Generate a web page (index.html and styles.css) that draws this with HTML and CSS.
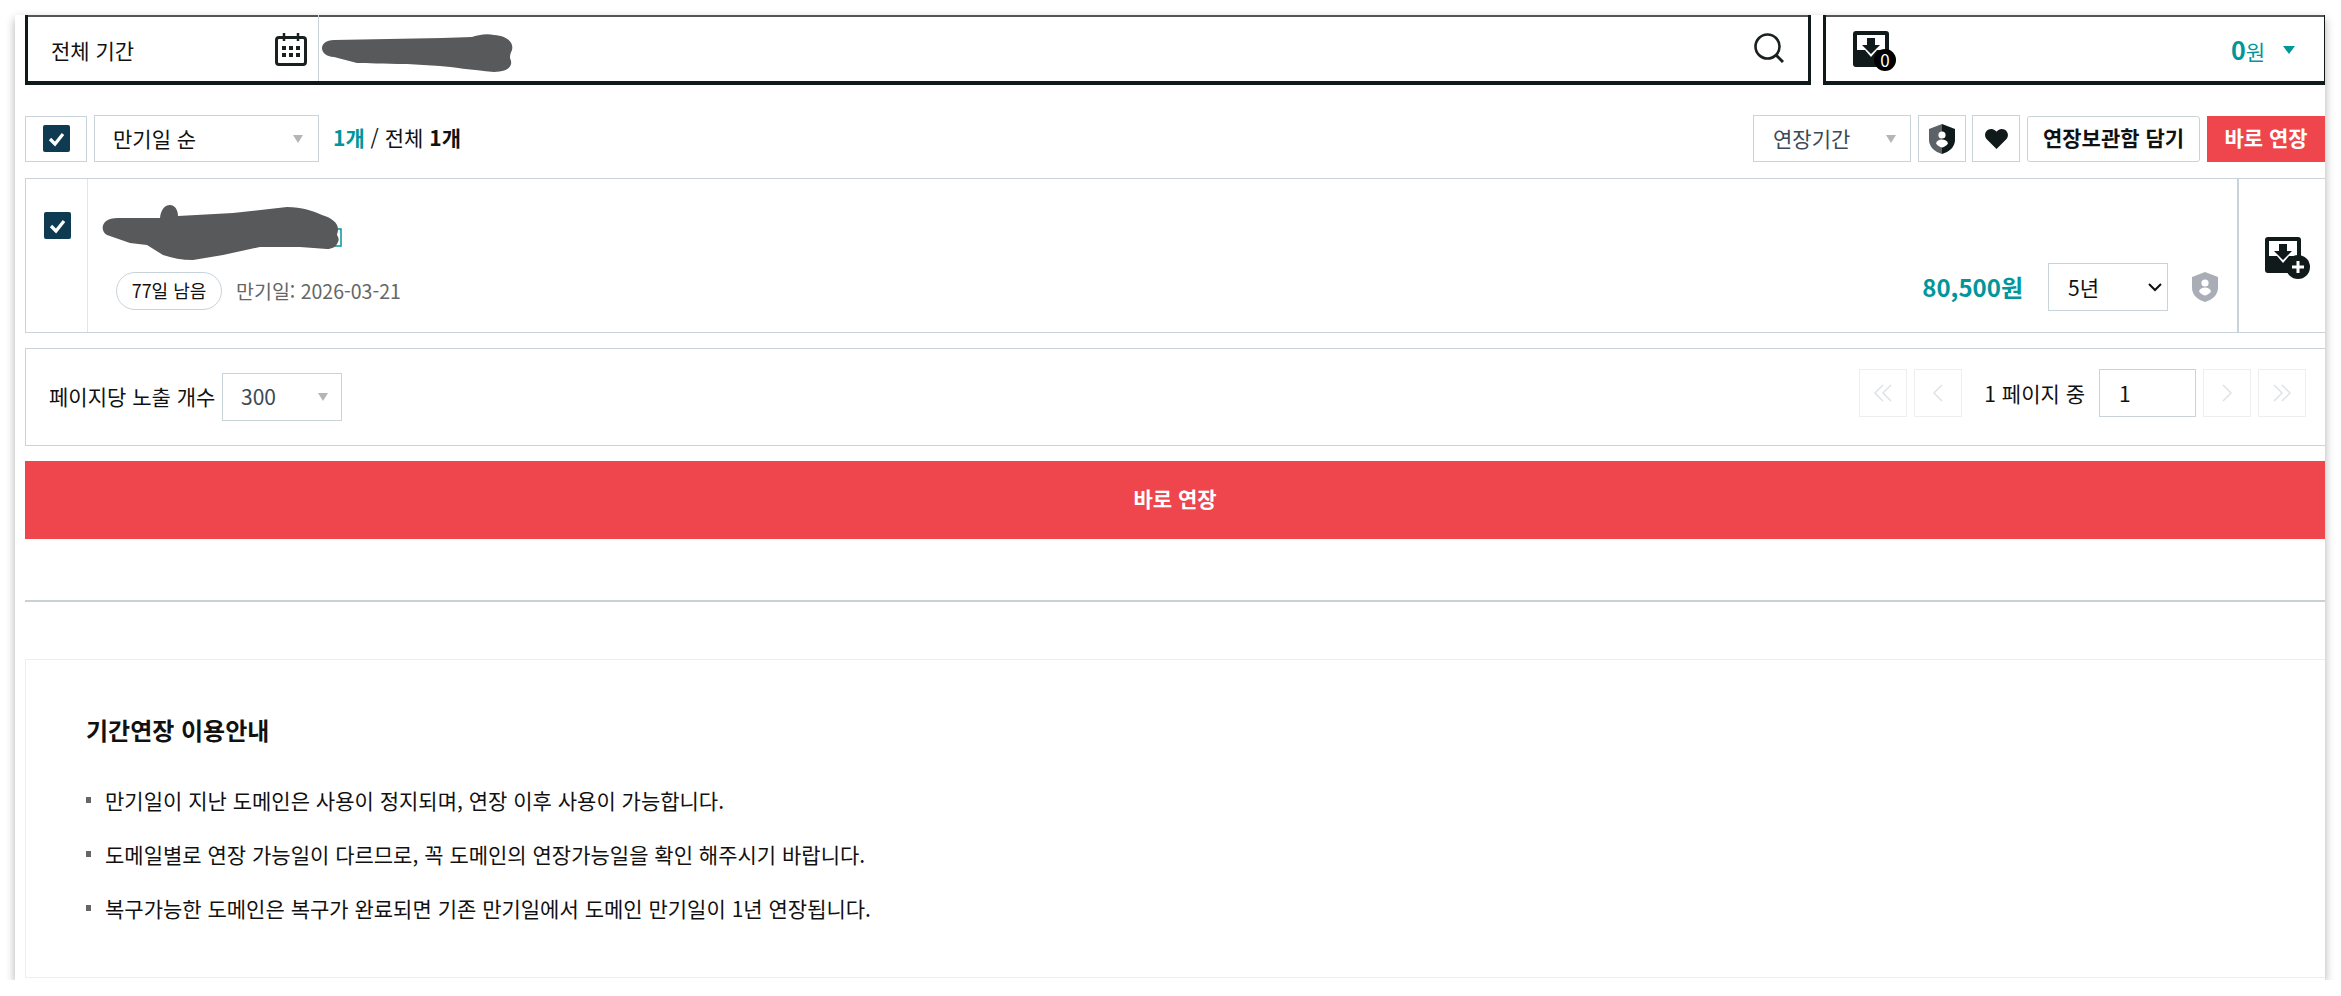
FILE: index.html
```html
<!DOCTYPE html>
<html lang="ko">
<head>
    <meta charset="UTF-8">
    <title>기간연장</title>
    <link rel="stylesheet" href="styles.css">
</head>
<body>
    <main class="page">
        <!-- Search + cart -->
        <div class="top-bar">
            <div class="search-box">
                <div class="period">
                    <span>전체 기간</span>
                    <svg class="icon-calendar" viewBox="0 0 32 33">
                        <rect x="1.5" y="4.5" width="29" height="27" rx="2.5" fill="none" stroke="#1a1f1f" stroke-width="3"/>
                        <path d="M9 0v8M23 0v8" stroke="#1a1f1f" stroke-width="2.5"/>
                        <path d="M7 13h4v4H7zM14 13h4v4h-4zM21 13h4v4h-4zM7 20h4v4H7zM14 20h4v4h-4zM21 20h4v4h-4z" fill="#1a1f1f"/>
                    </svg>
                </div>
                <div class="keyword">
                    <svg class="scribble scribble-search" viewBox="0 0 192 38">
                        <path d="M12 6L120 4L150 3C155 1 165 -1 172 1C185 2 192 8 190 16C188 20 188 22 188 24C192 32 186 38 172 38C150 36 130 33 118 32L85 30C60 30 45 29 35 29L12 23C-4 22 -4 6 12 6Z" fill="#58595b"/>
                    </svg>
                </div>
                <svg class="icon-search" viewBox="0 0 30 30">
                    <circle cx="13.5" cy="13.5" r="12" fill="none" stroke="#1a1f1f" stroke-width="2.6"/>
                    <path d="M22 22l7 7" stroke="#1a1f1f" stroke-width="3"/>
                </svg>
            </div>
            <div class="cart-box">
                <span class="icon-wrap">
                    <svg class="icon-inbox" viewBox="0 0 36 36">
                        <path fill-rule="evenodd" d="M3 0h30a3 3 0 0 1 3 3v30a3 3 0 0 1-3 3H3a3 3 0 0 1-3-3V3a3 3 0 0 1 3-3zM4 4v15h8l6 7 6-7h8V4z" fill="#101a1a"/>
                        <path d="M14 7h8v7h5l-9 9-9-9h5z" fill="#101a1a"/>
                    </svg>
                    <span class="cart-count">0</span>
                </span>
                <span class="cart-total"><b>0</b>원</span>
                <span class="caret caret-teal"></span>
            </div>
        </div>

        <!-- Toolbar -->
        <div class="toolbar">
            <div class="check-cell"><span class="check"><svg viewBox="0 0 27 27"><path d="M7 14l5 5 8-10" fill="none" stroke="#fff" stroke-width="3.2"/></svg></span></div>
            <div class="fake-select sort-select"><span>만기일 순</span><span class="caret"></span></div>
            <div class="count"><b class="teal">1개</b> / 전체 <b>1개</b></div>
            <div class="toolbar-right">
                <div class="fake-select period-select"><span>연장기간</span><span class="caret"></span></div>
                <div class="icon-btn">
                    <svg class="icon-shield" viewBox="0 0 26 30">
                        <path d="M13 0L0 5v11c0 7 6 12 13 14z" fill="#5d6266"/>
                        <path d="M13 0l13 5v11c0 7-6 12-13 14z" fill="#101a1a"/>
                        <circle cx="13" cy="11" r="3.6" fill="#fff"/>
                        <path d="M7 19.500c1-3 3-4 6-4s5 1 6 4c-1.500 2-3.500 3.500-6 4-2.500-.5-4.500-2-6-4z" fill="#fff"/>
                    </svg>
                </div>
                <div class="icon-btn">
                    <svg class="icon-heart" viewBox="0 0 24 21">
                        <path d="M12 21L1.500 10.500C-2 6 1 0 6.500 0 9 0 11 1.500 12 3c1-1.500 3-3 5.500-3C23 0 26 6 22.500 10.500z" fill="#101a1a"/>
                    </svg>
                </div>
                <button class="btn-keep">연장보관함 담기</button>
                <button class="btn-now">바로 연장</button>
            </div>
        </div>

        <!-- Domain row -->
        <div class="item">
            <div class="item-check"><span class="check"><svg viewBox="0 0 27 27"><path d="M7 14l5 5 8-10" fill="none" stroke="#fff" stroke-width="3.2"/></svg></span></div>
            <div class="item-body">
                <div class="item-name">
                    <svg class="scribble scribble-name" viewBox="0 0 240 56">
                        <rect x="230" y="24" width="9" height="17" fill="none" stroke="#00969c" stroke-width="1.500"/>
                        <path d="M16 13L58 13C59 4 63 0 68 0C73 0 76 5 76 11L131 8L185 2C200 2 211 6 220 10C230 13 236 18 236 24C236 27 235 29 235 30C237 33 237 35 236 37C234 42 230 44 225 44L198 42L158 42L121 50L91 55C80 55 70 53 61 50L45 40L28 38L5 30C-2 26 -2 13 16 13Z" fill="#58595b"/>
                    </svg>
                </div>
                <div class="item-meta">
                    <span class="days">77일 남음</span>
                    <span class="expire">만기일: 2026-03-21</span>
                </div>
            </div>
            <div class="item-order">
                <span class="price">80,500원</span>
                <select class="year-select"><option>5년</option></select>
                <svg class="icon-shield icon-shield-off" viewBox="0 0 26 30">
                    <path d="M13 0L0 5v11c0 7 6 12 13 14 7-2 13-7 13-14V5z" fill="#a9aeb6"/>
                    <circle cx="13" cy="11" r="3.6" fill="#fff"/>
                    <path d="M7 19.500c1-3 3-4 6-4s5 1 6 4c-1.500 2-3.500 3.500-6 4-2.500-.5-4.500-2-6-4z" fill="#fff"/>
                </svg>
            </div>
            <div class="item-add">
                <span class="icon-wrap">
                    <svg class="icon-inbox" viewBox="0 0 36 36">
                        <path fill-rule="evenodd" d="M3 0h30a3 3 0 0 1 3 3v30a3 3 0 0 1-3 3H3a3 3 0 0 1-3-3V3a3 3 0 0 1 3-3zM4 4v15h8l6 7 6-7h8V4z" fill="#101a1a"/>
                        <path d="M14 7h8v7h5l-9 9-9-9h5z" fill="#101a1a"/>
                    </svg>
                    <span class="cart-count add-plus">
                        <svg viewBox="0 0 24 24"><path d="M12 6v12M6 12h12" stroke="#fff" stroke-width="3"/></svg>
                    </span>
                </span>
            </div>
        </div>

        <!-- Paging -->
        <div class="pager">
            <span class="pager-label">페이지당 노출 개수</span>
            <div class="fake-select size-select"><span>300</span><span class="caret"></span></div>
            <div class="pager-right">
                <span class="page-btn"><svg viewBox="0 0 20 18"><path d="M10 1L2 9l8 8M18 1l-8 8 8 8" fill="none" stroke="#dfe2e5" stroke-width="1.500"/></svg></span>
                <span class="page-btn"><svg viewBox="0 0 20 18"><path d="M14 1L6 9l8 8" fill="none" stroke="#dfe2e5" stroke-width="1.500"/></svg></span>
                <span class="page-text">1 페이지 중</span>
                <input class="page-input" value="1">
                <span class="page-btn"><svg viewBox="0 0 20 18"><path d="M6 1l8 8-8 8" fill="none" stroke="#dfe2e5" stroke-width="1.500"/></svg></span>
                <span class="page-btn"><svg viewBox="0 0 20 18"><path d="M2 1l8 8-8 8M10 1l8 8-8 8" fill="none" stroke="#dfe2e5" stroke-width="1.500"/></svg></span>
            </div>
        </div>

        <button class="btn-renew">바로 연장</button>
        <hr class="line">

        <!-- Guide -->
        <section class="guide">
            <h2>기간연장 이용안내</h2>
            <ul>
                <li>만기일이 지난 도메인은 사용이 정지되며, 연장 이후 사용이 가능합니다.</li>
                <li>도메일별로 연장 가능일이 다르므로, 꼭 도메인의 연장가능일을 확인 해주시기 바랍니다.</li>
                <li>복구가능한 도메인은 복구가 완료되면 기존 만기일에서 도메인 만기일이 1년 연장됩니다.</li>
            </ul>
        </section>
    </main>
</body>
</html>
```

FILE: styles.css
```css
* {
    box-sizing: border-box;
}

body {
    margin: 0;
    background-color: #fff;
    color: #111;
    font-family: "Noto Sans CJK KR", "Noto Sans", sans-serif;
    font-size: 21px;
    line-height: 30px;
}

b {
    font-weight: 700;
}

.teal {
    color: #00969c;
}

.page {
    width: 2310px;
    height: 965px;
    margin: 15px 0 0 15px;
    padding-left: 10px;
    background-color: #fff;
    box-shadow: 0 4px 9px rgba(0, 0, 0, 0.32);
}

/* Search + cart */
.top-bar {
    display: flex;
    gap: 12px;
    height: 70px;
}

.search-box {
    display: flex;
    align-items: center;
    flex: 1;
    padding-right: 24px;
    border: solid #101a1a;
    border-width: 0 3px 4px 3px;
    box-shadow: inset 0 2px 0 #555;
}

.period {
    display: flex;
    align-items: center;
    justify-content: space-between;
    align-self: stretch;
    width: 291px;
    padding: 3px 11px 0 23px;
    border-right: 1px solid #c9d3da;
}

.icon-calendar {
    width: 32px;
    height: 33px;
    margin-top: -1px;
}

.keyword {
    position: relative;
    flex: 1;
    align-self: stretch;
}

.scribble {
    position: absolute;
}

.scribble-search {
    left: 3px;
    top: 19px;
    width: 192px;
    height: 38px;
}

.icon-search {
    width: 30px;
    height: 30px;
    margin-top: -1px;
}

.cart-box {
    display: flex;
    align-items: center;
    width: 502px;
    padding: 0 29px 0 27px;
    border: solid #101a1a;
    border-width: 0 1px 4px 3px;
    box-shadow: inset 0 2px 0 #555;
}

.icon-wrap {
    position: relative;
    display: block;
    width: 36px;
    height: 36px;
}

.icon-inbox {
    display: block;
    width: 36px;
    height: 36px;
}

.cart-box .icon-wrap {
    margin-top: 2px;
}

.cart-count {
    position: absolute;
    right: -7px;
    bottom: -4px;
    width: 22px;
    height: 22px;
    border-radius: 50%;
    background-color: #000;
    color: #fff;
    font-size: 17px;
    line-height: 22px;
    text-align: center;
}

.cart-total {
    margin-left: auto;
    margin-top: 3px;
    color: #00969c;
    font-size: 21px;
}

.cart-total b {
    font-size: 25px;
}

.caret {
    width: 0;
    height: 0;
    border: solid transparent;
    border-width: 8px 5.5px 0;
    border-top-color: #b5b5b5;
}

.caret-teal {
    margin-top: 3px;
    margin-left: 18px;
    border-width: 8px 6px 0;
    border-top-color: #00969c;
}

/* Toolbar */
.toolbar {
    display: flex;
    align-items: center;
    height: 47px;
    margin-top: 30px;
}

.check-cell {
    display: flex;
    align-items: center;
    justify-content: center;
    width: 62px;
    height: 46px;
    border: 1px solid #c9d3da;
}

.check {
    display: block;
    width: 27px;
    height: 27px;
    border-radius: 2px;
    background-color: #0e3a52;
}

.check svg {
    display: block;
}

.fake-select {
    display: flex;
    align-items: center;
    justify-content: space-between;
    height: 47px;
    border: 1px solid #c9d3da;
}

.fake-select span:first-child {
    margin-top: -2px;
}

.sort-select {
    width: 225px;
    margin-left: 7px;
    padding: 0 15px 0 18px;
}

.count {
    margin-left: 14px;
    margin-top: -3px;
}

.toolbar-right {
    display: flex;
    align-items: center;
    gap: 6px;
    margin-left: auto;
}

.period-select {
    width: 158px;
    margin-right: 1px;
    padding: 0 14px 0 19px;
    color: #3b4a56;
}

.icon-btn {
    display: flex;
    align-items: center;
    justify-content: center;
    width: 48px;
    height: 47px;
    border: 1px solid #c9d3da;
}

.icon-shield {
    width: 26px;
    height: 30px;
}

.icon-heart {
    width: 23px;
    height: 20px;
}

.btn-keep,
.btn-now,
.btn-renew {
    border: none;
    font-family: inherit;
    font-size: 21px;
    font-weight: 700;
    cursor: pointer;
}

.btn-keep {
    width: 173px;
    height: 46px;
    margin-left: 1px;
    padding: 0 0 3px;
    border: 1px solid #c9d3da;
    border-radius: 3px;
    background-color: #fff;
    color: #111;
}

.btn-now {
    width: 118px;
    height: 46px;
    margin-left: 1px;
    padding: 0 0 4px;
    background-color: #ef454d;
    color: #fff;
}

/* Domain row */
.item {
    display: flex;
    height: 155px;
    margin-top: 16px;
    border: 1px solid #c9d3da;
    border-right: none;
}

.item-check {
    width: 62px;
    padding: 33px 0 0 18px;
    border-right: 1px solid #dfe5e9;
}

.item-body {
    flex: 1;
    padding-left: 28px;
}

.item-name {
    position: relative;
    height: 93px;
}

.scribble-name {
    left: -14px;
    top: 26px;
    width: 240px;
    height: 56px;
}

.item-meta {
    display: flex;
    align-items: center;
    gap: 14px;
}

.days {
    width: 106px;
    height: 38px;
    border: 1px solid #c9d3da;
    border-radius: 19px;
    font-size: 18px;
    line-height: 35px;
    text-align: center;
}

.expire {
    color: #666;
    font-size: 19.5px;
}

.item-order {
    display: flex;
    align-items: center;
    align-self: flex-end;
    height: 48px;
    margin-bottom: 21px;
    padding-right: 19px;
}

.price {
    color: #00969c;
    font-size: 24px;
    font-weight: 700;
}

.year-select {
    width: 120px;
    height: 48px;
    margin: 0 24px 0 25px;
    padding-left: 19px;
    border: 1px solid #c9d3da;
    border-radius: 0;
    appearance: none;
    background: #fff url("data:image/svg+xml,%3Csvg xmlns='http://www.w3.org/2000/svg' width='14' height='9' viewBox='0 0 14 9'%3E%3Cpath d='M1 1l6 6 6-6' fill='none' stroke='%23111' stroke-width='2'/%3E%3C/svg%3E") no-repeat right 5px center;
    color: #111;
    font-family: inherit;
    font-size: 21px;
}

.item-add {
    width: 88px;
    padding: 58px 0 0 26px;
    border-left: 2px solid #c9d3da;
}

.add-plus {
    right: -9px;
    bottom: -6px;
    width: 24px;
    height: 24px;
    background-color: #101a1a;
}

.add-plus svg {
    display: block;
}

/* Paging */
.pager {
    display: flex;
    align-items: center;
    height: 98px;
    margin-top: 15px;
    padding: 0 19px 0 23px;
    border: 1px solid #c9d3da;
    border-right: none;
}

.pager-label {
    width: 173px;
    margin-top: -3px;
    white-space: nowrap;
}

.size-select {
    width: 120px;
    height: 48px;
    padding: 0 13px 0 18px;
    color: #3b4a56;
}

.pager-right {
    display: flex;
    align-items: center;
    gap: 7px;
    margin-top: -8px;
    margin-left: auto;
}

.page-btn {
    display: flex;
    align-items: center;
    justify-content: center;
    width: 48px;
    height: 48px;
    border: 1px solid #eceef0;
}

.page-btn svg {
    width: 20px;
    height: 18px;
}

.page-text {
    margin: 0 7px 0 15px;
}

.page-input {
    width: 97px;
    height: 48px;
    padding-left: 19px;
    border: 1px solid #c9d3da;
    color: #111;
    font-family: inherit;
    font-size: 21px;
}

.btn-renew {
    display: block;
    width: 100%;
    height: 78px;
    margin-top: 15px;
    padding: 0 0 4px;
    background-color: #ef454d;
    color: #fff;
}

.line {
    height: 2px;
    margin: 61px 0 0;
    border: none;
    background-color: #c8d2d5;
}

/* Guide */
.guide {
    height: 319px;
    margin-top: 57px;
    padding: 52px 60px 0;
    border: 1px solid #eee;
    border-right: none;
}

.guide h2 {
    margin: 0;
    font-size: 24px;
    font-weight: 700;
    line-height: 36px;
}

.guide ul {
    margin: 34px 0 0;
    padding: 0;
    list-style: none;
}

.guide li {
    position: relative;
    margin-bottom: 18px;
    padding-left: 19px;
    line-height: 36px;
}

.guide li::before {
    content: "";
    position: absolute;
    left: 0;
    top: 15px;
    width: 5px;
    height: 6px;
    background-color: #666;
}
```
